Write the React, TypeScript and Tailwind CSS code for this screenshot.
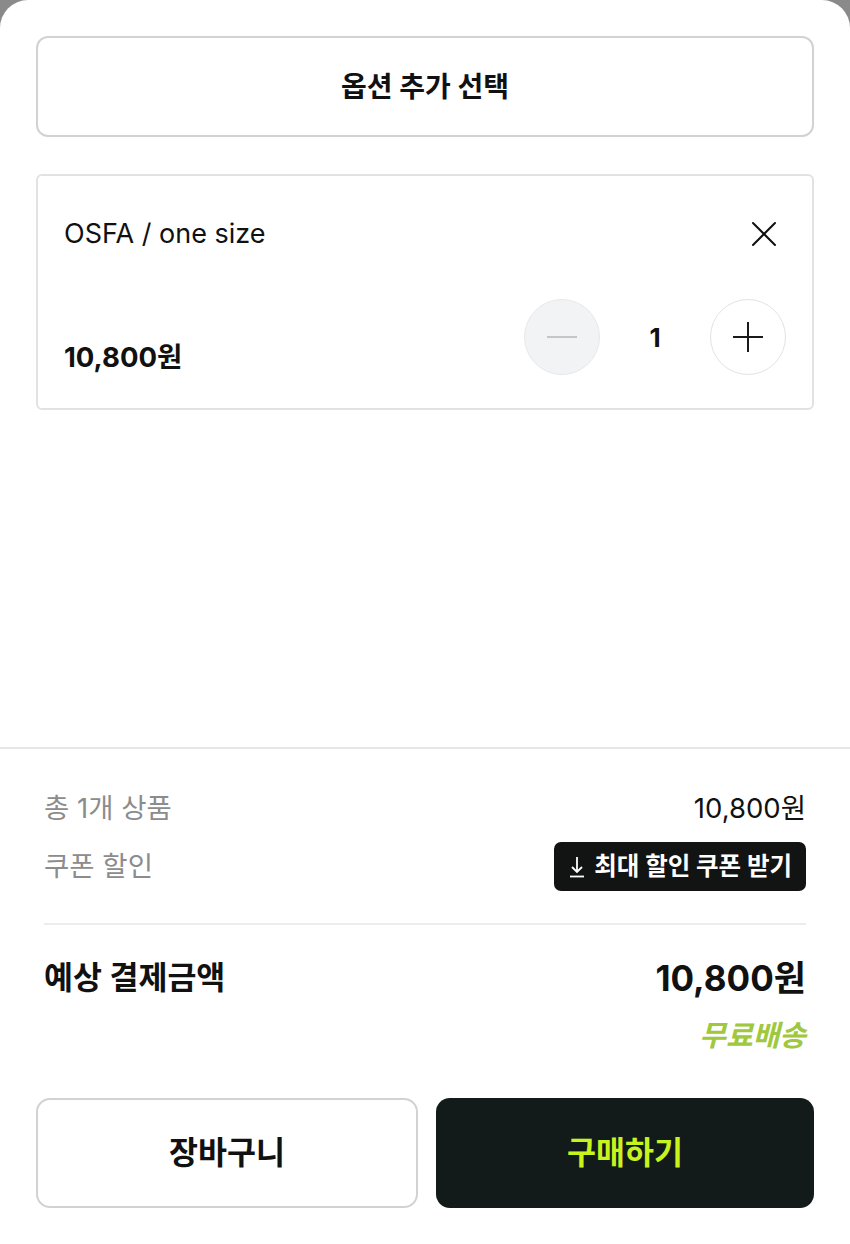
import { X } from "lucide-react";

const FONT = { fontFamily: '"Inter", "Noto Sans CJK KR", sans-serif' };

function QtyButton({ kind }: { kind: "minus" | "plus" }) {
  const disabled = kind === "minus";
  return (
    <button
      className={
        "flex h-[76px] w-[76px] items-center justify-center rounded-full border " +
        (disabled ? "border-[#e6e8ea] bg-[#f1f3f5]" : "border-[#e3e3e3] bg-white")
      }
    >
      <svg width="34" height="34" viewBox="0 0 34 34" fill="none">
        <line
          x1="2"
          y1="17"
          x2="32"
          y2="17"
          stroke={disabled ? "#c3c6c9" : "#1a1a1a"}
          strokeWidth="2"
        />
        {!disabled && <line x1="17" y1="2" x2="17" y2="32" stroke="#1a1a1a" strokeWidth="2" />}
      </svg>
    </button>
  );
}

export default function App() {
  return (
    <div className="min-h-[1244px] bg-[#8a8a8a]" style={FONT}>
      <div className="flex h-[1244px] flex-col rounded-t-[28px] bg-white">
        {/* Top: option selector + selected item */}
        <div className="flex-1 px-[36px] pt-[36px]">
          <button className="flex h-[101px] w-full items-center justify-center rounded-[12px] border-2 border-[#d2d2d2] bg-white">
            <span className="text-[28px] font-bold text-[#111]">옵션 추가 선택</span>
          </button>

          <div className="mt-[37px] flex h-[236px] flex-col rounded-[6px] border-2 border-[#e2e2e2] px-[26px] pt-[40px]">
            <div className="flex h-[36px] items-center justify-between">
              <span className="text-[27px] text-[#111]">OSFA / one size</span>
              <X className="-my-[4px] h-[44px] w-[44px] text-[#111]" strokeWidth={1.1} />
            </div>
            <div className="mt-[47px] flex items-end justify-between">
              <span className="text-[27.5px] font-bold leading-[36px] text-[#111]">10,800원</span>
              <div className="flex items-center">
                <QtyButton kind="minus" />
                <span className="w-[110px] text-center text-[26px] font-bold text-[#111]">1</span>
                <QtyButton kind="plus" />
              </div>
            </div>
          </div>
        </div>

        {/* Bottom: summary + actions */}
        <div className="h-[497px] border-t-2 border-[#e6e6e6]">
          <div className="px-[44px]">
            <div className="mt-[40px] flex h-[40px] items-center justify-between">
              <span className="text-[27.5px] text-[#8c8c8c]">총 1개 상품</span>
              <span className="text-[27.5px] text-[#111]">10,800원</span>
            </div>
            <div className="mt-[13px] flex h-[49px] items-center justify-between">
              <span className="text-[27.5px] text-[#8c8c8c]">쿠폰 할인</span>
              <button className="flex h-[49px] items-center gap-[9px] rounded-[7px] bg-[#121414] pl-[15px] pr-[14px] text-[24.5px] font-bold text-white">
                <svg width="16" height="22" viewBox="0 0 16 22" fill="none" stroke="white" strokeWidth="1.8">
                  <path d="M8 1v15" />
                  <path d="M3 11l5 5 5-5" />
                  <path d="M1 20.5h14" />
                </svg>
                <span>최대 할인 쿠폰 받기</span>
              </button>
            </div>
            <div className="mt-[32px] h-[2px] bg-[#ececec]" />
            <div className="mt-[29px] flex h-[48px] items-center justify-between">
              <span className="text-[31.5px] font-bold text-[#111]">예상 결제금액</span>
              <span className="text-[35px] font-bold text-[#111]">10,800원</span>
            </div>
            <div className="mt-[16px] flex h-[36px] items-center justify-end">
              <span className="text-[29px] font-bold italic text-[#a0c83c]">무료배송</span>
            </div>
          </div>

          <div className="mt-[44px] flex gap-[18px] px-[36px]">
            <button className="flex h-[110px] flex-1 items-center justify-center rounded-[14px] border-2 border-[#d2d2d2] bg-white text-[31.5px] font-bold text-[#111]">
              장바구니
            </button>
            <button className="flex h-[110px] flex-1 items-center justify-center rounded-[14px] bg-[#131a1a] text-[31.5px] font-bold text-[#c8f41e]">
              구매하기
            </button>
          </div>
        </div>
      </div>
    </div>
  );
}
